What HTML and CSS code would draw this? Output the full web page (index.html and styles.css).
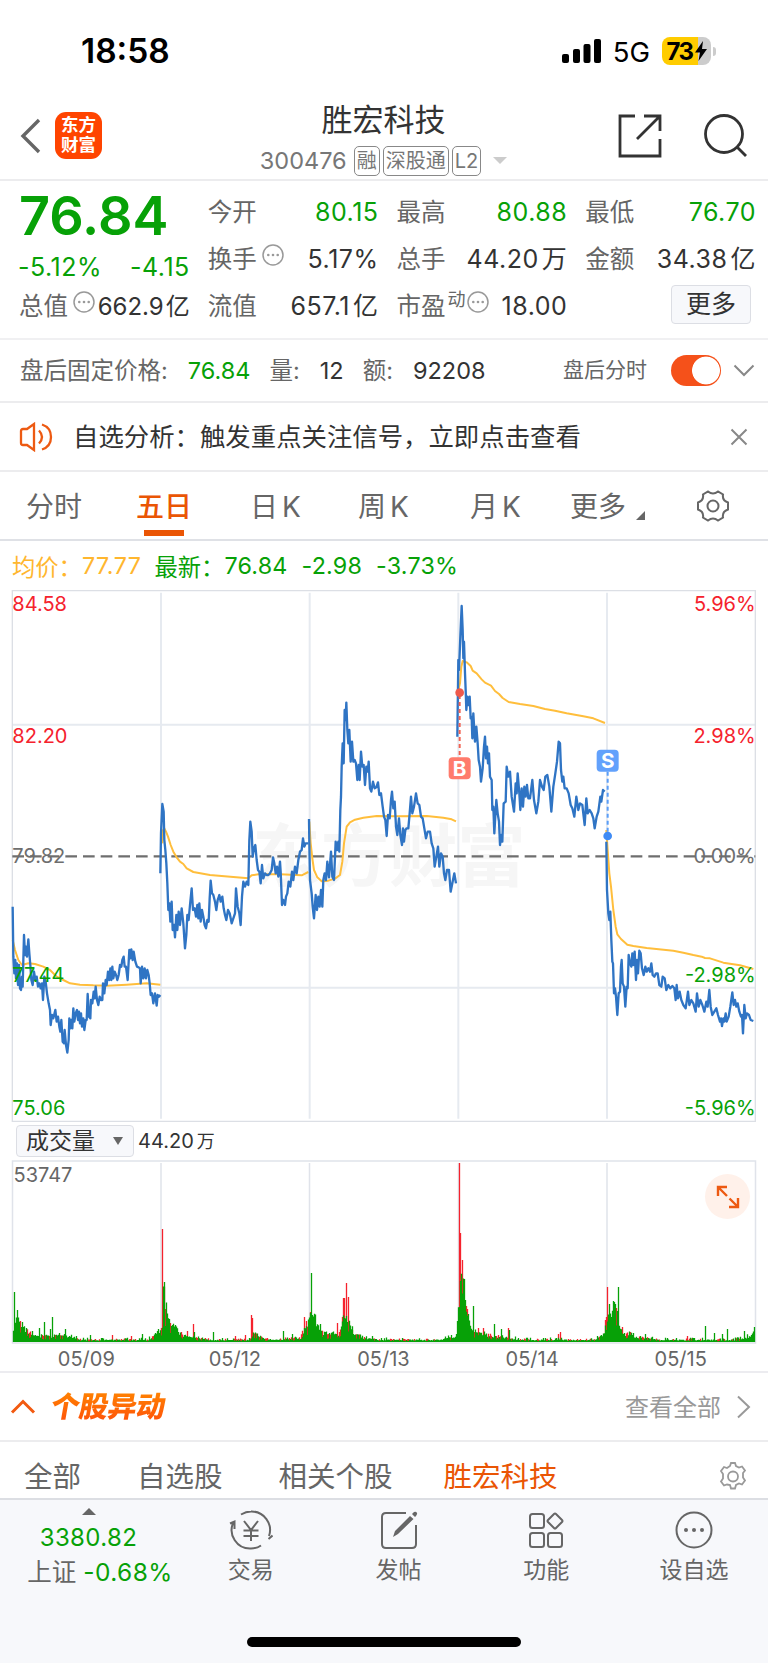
FILE: index.html
```
<!DOCTYPE html>
<html lang="zh-CN">
<head>
  <meta charset="UTF-8" />
  <meta name="viewport" content="width=device-width, initial-scale=1.0"/>
  <title>胜宏科技 300476</title>
  <link rel="stylesheet" href="styles.css">
</head>
<body>

<div class="status-bar">
  <span class="time">18:58</span>
  <div class="status-right">
    <svg class="signal" width="39" height="24" viewBox="0 0 39 24">
      <rect x="0" y="15" width="7" height="9" rx="2"/>
      <rect x="11" y="10" width="7" height="14" rx="2"/>
      <rect x="21.500" y="5" width="7" height="19" rx="2"/>
      <rect x="32" y="0" width="7" height="24" rx="2"/>
    </svg>
    <span class="network">5G</span>
    <div class="battery">
      <span>73</span>
      <svg width="12" height="20" viewBox="0 0 12 20"><path d="M8 0 0 11.500h5L3.500 20 12 8H7z"/></svg>
    </div>
    <span class="battery-cap"></span>
  </div>
</div>

<header class="header">
  <svg class="back" width="21" height="36" viewBox="0 0 21 36"><path d="M19 2 3 18l16 16"/></svg>
  <div class="logo">东方<br>财富</div>
  <div class="title">
    <h1>胜宏科技</h1>
    <div class="code">
      <span class="code-num">300476</span>
      <span class="badge">融</span>
      <span class="badge">深股通</span>
      <span class="badge">L2</span>
      <i class="tri-down"></i>
    </div>
  </div>
  <svg class="share" width="44" height="44" viewBox="0 0 44 44"><path d="M17 2H2v40h40V25M26 2h16v15M41 3 19 25"/></svg>
  <svg class="search" width="44" height="44" viewBox="0 0 44 44"><circle cx="20" cy="20" r="18.500"/><path d="M33 33l9 9"/></svg>
</header>

<section class="quote">
  <div class="cell big green">76.84</div>
  <div class="cell"><label>今开</label><b class="green">80.15</b></div>
  <div class="cell"><label>最高</label><b class="green">80.88</b></div>
  <div class="cell"><label>最低</label><b class="green">76.70</b></div>

  <div class="cell change green"><b>-5.12%</b><b>-4.15</b></div>
  <div class="cell"><label>换手</label><svg class="dots" viewBox="0 0 22 22"><use href="#dots"/></svg><b>5.17%</b></div>
  <div class="cell"><label>总手</label><b>44.20<u>万</u></b></div>
  <div class="cell"><label>金额</label><b>34.38<u>亿</u></b></div>

  <div class="cell total"><label>总值</label><svg class="dots" viewBox="0 0 22 22"><use href="#dots"/></svg><b>662.9<u>亿</u></b></div>
  <div class="cell"><label>流值</label><b>657.1<u>亿</u></b></div>
  <div class="cell pe"><label>市盈<sup>动</sup></label><svg class="dots" viewBox="0 0 22 22"><use href="#dots"/></svg><b>18.00</b></div>
  <div class="cell"><button class="more">更多</button></div>
</section>

<section class="after-hours">
  <label>盘后固定价格:</label><b class="green">76.84</b>
  <label>量:</label><b>12</b>
  <label>额:</label><b>92208</b>
  <span class="ah-label">盘后分时</span>
  <span class="toggle"></span>
  <svg class="chev" width="22" height="13" viewBox="0 0 22 13"><path d="M1.500 1.500 11 11l9.500-9.500"/></svg>
</section>

<section class="notice">
  <svg class="speaker" width="34" height="30" viewBox="0 0 34 30"><path d="M2 9v12q0 2 2 2h4l7 5V2L8 7H4q-2 0-2 2zM20 8.500q6 6.500 0 13M23 2.500q9 3 9 12.500t-9 12.500"/></svg>
  <span>自选分析：触发重点关注信号，立即点击查看</span>
  <svg class="close" width="18" height="18" viewBox="0 0 18 18"><path d="M1.500 1.500l15 15M16.500 1.500l-15 15"/></svg>
</section>

<nav class="tabs">
  <span>分时</span>
  <span class="active">五日</span>
  <span>日<em>K</em></span>
  <span>周<em>K</em></span>
  <span>月<em>K</em></span>
  <span>更多<i></i></span>
  <svg class="gear" width="34" height="32" viewBox="0 0 34 32"><path d="M12 1.500q5 4 10 0l5 3q-1 6 5 8v7q-6 2-5 8l-5 3q-5-4-10 0l-5-3q1-6-5-8v-7q6-2 5-8z"/><circle cx="17" cy="16" r="5.500"/></svg>
</nav>

<div class="legend">
  <span class="avg">均价：</span><span class="avg num">77.77</span>
  <span class="green">最新：</span><span class="green num">76.84</span>
  <span class="green num">-2.98</span>
  <span class="green num">-3.73%</span>
</div>

<!-- price chart, drawn at 3 units per pixel -->
<div class="price-chart">
  <svg width="768" height="533" viewBox="0 0 2304 1599">
    <g class="watermark"><text x="757" y="874">东方财富</text></g>
    <g class="grid">
      <path d="M483 8V1586M929 8V1586M1375 8V1586M1821 8V1586M37 404H2266M37 1193H2266"/>
      <path class="frame" d="M37 2H2266V1594H37z"/>
    </g>
    <path class="zero" d="M37 799H2266"/>
    <g class="avg-line">
      <polyline transform="translate(0 780)" points="38,270 45,300 55,330 66,345 85,340 105,342 130,350 150,360 170,380 190,390 210,400 240,404 280,406 320,407 380,404 440,400 481,404"/>
      <polyline transform="translate(0 780)" points="487,-20 489,-60 493,-65 498,-55 504,-40 512,-15 520,5 530,22 540,35 550,42 560,55 580,66 630,75 700,81 745,85 755,76 775,73 840,73 905,76 925,66"/>
      <polyline transform="translate(900 -30)" points="28,725 30,760 32,790 37,835 42,870 52,892 65,904 85,902 105,896 120,885 127,845 132,790 140,740 150,727 165,719 190,713 230,708 290,709 380,708 430,713 455,718 468,724"/>
      <polyline transform="translate(900 -30)" points="475,330 480,310 484,260 488,243 500,247 512,258 518,272 530,280 545,298 555,308 573,317 585,333 597,342 608,354 626,366 660,372 700,378 735,387 765,392 800,400 850,409 880,415 915,429"/>
      <polyline transform="translate(1320 450)" points="499,270 503,330 508,400 513,440 520,510 527,560 532,583 543,597 562,614 580,618 620,624 700,632 730,638 760,645 785,650 795,654 810,655 850,668 900,676 940,687"/>
    </g>
    <g class="price-line">
      <polyline transform="translate(0 780)" points="38,170 40,320 43,370 46,330 48,385 51,340 54,405 57,345 60,415 63,420 66,380 68,410 70,330 72,255 75,315 78,290 81,320 85,268 88,310 91,345 94,390 98,405 102,365 106,390 110,380 114,410 118,400 122,415 126,400 129,450 133,380 137,395 141,430 146,460 150,480 152,525 156,495 160,505 166,480 170,515 174,500 178,530 181,545 184,510 188,575 192,580 194,540 198,585 202,608 206,570 208,505 211,535 214,510 217,535 220,475 223,515 227,490 231,480 234,510 237,485 240,520 243,490 246,530 250,505 253,540 257,510 260,510 263,432 267,500 271,505 273,450 277,460 281,425 284,445 287,410 291,450 295,465 299,440 303,450 307,450 309,400 313,430 317,390 320,405 324,365 328,390 331,355 334,390 337,350 340,385 344,365 348,375 352,390 356,375 360,345 364,350 367,330 371,320 374,350 378,350 383,390 388,300 391,325 394,298 398,330 401,305 406,335 411,350 416,352 420,355 422,400 426,350 430,385 434,355 438,385 442,360 446,375 449,400 452,435 456,430 460,460 465,430 470,467 473,435 477,440 481,435"/>
      <polyline transform="translate(0 780)" points="481,70 483,-50 487,-138 491,-115 493,-30 496,0 499,40 502,100 505,180 508,160 511,215 515,155 518,240 522,225 525,262 529,195 532,240 536,185 540,225 545,175 550,220 555,295 559,255 562,195 566,210 570,165 575,115 579,180 584,175 588,200 592,165 595,205 598,160 602,215 606,180 610,200 614,225 618,235 622,210 626,215 629,145 632,92 636,130 640,135 645,155 649,180 653,150 658,135 662,155 667,140 671,175 675,195 679,210 684,180 689,190 695,220 700,205 705,190 708,115 713,170 718,190 722,225 726,140 730,95 735,110 740,95 745,105 748,-30 751,-85 755,-55 758,20 762,-5 766,-15 770,30 774,60 778,65 782,100 786,45 790,85 795,70 800,75 805,75 810,70 815,60 819,22 823,40 827,70 831,50 835,80 840,35 842,65 846,165 850,150 855,165 858,140 862,130 866,95 871,110 876,65 880,90 885,50 890,70 895,30 900,5 905,0 909,-35 913,-10 917,-20 921,-20 925,-20"/>
      <polyline transform="translate(900 -30)" points="27,717 28,790 30,900 35,940 38,980 42,1015 47,945 51,990 55,950 59,980 63,930 67,980 70,900 74,880 78,900 82,845 87,892 93,815 97,890 102,900 107,785 111,810 115,785 118,815 121,690 123,650 125,560 128,490 131,550 134,390 137,420 139,368 142,450 145,490 148,450 152,545 156,485 160,545 164,540 168,550 172,600 176,555 179,600 183,515 187,560 191,555 195,615 199,560 203,575 206,545 210,625 214,635 219,605 224,625 229,622 234,607 238,645 243,640 248,680 252,710 256,720 260,768 264,705 269,715 273,660 276,635 280,685 284,665 288,740 292,765 297,715 301,765 306,795 309,745 312,785 316,750 320,745 325,745 329,700 333,650 337,700 342,680 348,640 353,670 358,675 363,710 368,715 373,745 378,775 383,755 390,755 395,790 400,805 404,860 409,830 414,800 418,860 423,820 428,830 432,880 436,900 441,870 447,870 452,935 457,910 463,880 468,910"/>
      <polyline transform="translate(900 -30)" points="472,470 475,240 477,270 481,170 485,78 488,150 490,235 492,185 495,280 497,330 499,390 502,350 505,375 509,350 512,415 515,410 517,475 520,400 523,455 525,485 529,440 533,490 536,540 540,560 543,605 548,565 552,500 555,470 558,535 561,500 564,550 567,520 570,590 575,600 577,690 580,680 583,760 587,690 589,660 593,700 597,725 600,795 604,765 607,785 611,670 617,665 620,560 625,590 630,575 635,650 642,695 647,610 650,640 653,580 658,640 661,690 665,625 669,680 673,620 677,650 681,615 685,655 690,655 697,600 702,660 709,700 715,665 720,600 726,620 731,630 736,590 742,585 748,620 754,695 760,620 766,580 771,545 776,485 780,490 783,570 787,605 790,590 794,625 800,625 806,640 812,675 817,685 823,710 829,650 835,690 840,670 847,675 854,735 859,655 863,700 869,690 875,700 880,715 884,745 890,710 895,695 901,650 904,665 909,630 914,635"/>
      <polyline transform="translate(1320 450)" points="499,305 501,450 505,520 508,540 511,515 514,600 517,665 519,670 522,760 525,745 528,770 532,825 536,760 540,755 543,680 545,660 548,730 552,740 556,800 560,740 563,745 566,645 570,670 574,680 577,640 580,675 584,635 588,720 591,660 594,700 598,632 602,640 606,685 611,705 616,680 620,695 625,685 630,695 634,670 638,705 643,710 648,700 653,700 658,735 664,740 668,710 674,715 679,750 685,735 691,745 697,738 703,745 707,780 710,735 714,775 719,755 724,780 730,795 737,805 744,755 748,795 754,780 760,790 767,815 771,760 776,800 781,780 787,795 793,815 799,785 803,800 808,750 812,800 817,825 823,815 829,805 834,825 840,845 843,835 846,858 850,835 853,845 857,820 860,845 866,830 871,800 877,757 881,795 885,780 889,800 893,790 898,815 903,830 906,825 909,880 913,795 917,835 921,820 927,825 932,840 940,843"/>
    </g>
    <g class="buy">
      <path d="M1379 315V500"/><circle cx="1379" cy="308" r="13"/>
      <rect x="1346" y="502" width="66" height="66" rx="12"/><text x="1379" y="557">B</text>
    </g>
    <g class="sell">
      <path d="M1823 545V730"/><circle cx="1823" cy="738" r="13"/>
      <rect x="1790" y="479" width="66" height="66" rx="12"/><text x="1823" y="534">S</text>
    </g>
    <g class="axis">
      <text class="up" x="37" y="62">84.58</text>
      <text class="up" x="37" y="460">82.20</text>
      <text class="flat" x="37" y="819">79.82</text>
      <text class="down" x="37" y="1176">77.44</text>
      <text class="down" x="37" y="1574">75.06</text>
      <text class="up end" x="2267" y="62">5.96%</text>
      <text class="up end" x="2267" y="460">2.98%</text>
      <text class="flat end" x="2267" y="819">0.00%</text>
      <text class="down end" x="2267" y="1176">-2.98%</text>
      <text class="down end" x="2267" y="1574">-5.96%</text>
    </g>
  </svg>
</div>

<div class="indicator">
  <div class="select">成交量<i></i></div>
  <span>44.20<u>万</u></span>
</div>

<div class="volume-chart">
  <svg width="768" height="184" viewBox="0 0 768 184">
    <path class="grid-v" d="M161 3V181M309.500 3V181M458.500 3V181M607 3V181"/>
    <path class="frame" d="M12.500 1H755.500V183H12.500z"/>
    <path id="vol-red" class="vol-red"/>
    <path id="vol-green" class="vol-green"/>
    <text x="13.500" y="22">53747</text>
  </svg>
  <div class="expand">
    <svg width="24" height="24" viewBox="0 0 24 24"><path d="M2 11V2h9M2 2l9 9M22 13v9h-9M22 22l-8.500-8.500"/></svg>
  </div>
</div>

<div class="dates">
  <span>05/09</span><span>05/12</span><span>05/13</span><span>05/14</span><span>05/15</span>
</div>

<section class="moves">
  <svg class="up-chev" width="26" height="15" viewBox="0 0 26 15"><path d="M2 13.500 13 2.500l11 11"/></svg>
  <h2>个股异动</h2>
  <span class="all">查看全部</span>
  <svg class="right-chev" width="15" height="24" viewBox="0 0 15 24"><path d="M2 1.500 13 12 2 22.500"/></svg>
</section>

<nav class="filters">
  <span>全部</span>
  <span>自选股</span>
  <span>相关个股</span>
  <span class="active">胜宏科技</span>
  <svg width="30" height="30" viewBox="0 0 30 30"><path d="M12 4l1-3h4l1 3 3 1.500 3-1 3 4-2 2.500v4.500l2 3-3 4-3-1-3 1.500-1 3.500h-4l-1-3.500L9 22.500l-3 1-3-4 2-3V12L3 9l3-4 3 1z"/><circle cx="15" cy="14.500" r="5"/></svg>
</nav>

<footer class="bottom-bar">
  <div class="index">
    <i class="tri-up"></i>
    <div class="green index-val">3380.82</div>
    <div class="index-chg">上证<span class="green">-0.68%</span></div>
  </div>
  <div class="item">
    <svg width="44" height="40" viewBox="0 0 44 40"><path d="M12 4.500Q17 1.500 22 1.500A18.500 18.500 0 0 1 40 26M43.500 25.500l-4 3.500M32 35.500q-4.500 3-10 3A18.500 18.500 0 0 1 4.500 12M1 13.500l4.500-2V19M15 11l7 9 7-9M22 20v11M14.500 20.500h15M14.500 26h15"/></svg>
    交易
  </div>
  <div class="item">
    <svg width="40" height="40" viewBox="0 0 40 40"><path d="M27 3H7q-4 0-4 4v27q0 4 4 4h26q4 0 4-4V15"/><path class="fill" d="M31 6l3.500 3L19 24l-5 3 2-6zM33 4l2-2q2-1 3 1 .5 1-1 3l-1 1z"/></svg>
    发帖
  </div>
  <div class="item">
    <svg width="40" height="40" viewBox="0 0 40 40"><rect x="4" y="4" width="14" height="14" rx="2.500"/><rect x="4" y="23" width="14" height="14" rx="2.500"/><rect x="22" y="23" width="14" height="14" rx="2.500"/><path d="M28 4q1-1 2 0l6 6q1 1 0 2l-6 6q-1 1-2 0l-6-6q-1-1 0-2z"/></svg>
    功能
  </div>
  <div class="item">
    <svg width="40" height="40" viewBox="0 0 40 40"><circle cx="20" cy="20" r="17.500"/><g class="fill"><circle cx="12" cy="20" r="2"/><circle cx="20" cy="20" r="2"/><circle cx="28" cy="20" r="2"/></g></svg>
    设自选
  </div>
  <span class="home-indicator"></span>
</footer>

<svg class="defs">
  <symbol id="dots" viewBox="0 0 22 22"><circle class="ring" cx="11" cy="11" r="10"/><circle cx="6.300" cy="11" r="1.300"/><circle cx="11" cy="11" r="1.300"/><circle cx="15.700" cy="11" r="1.300"/></symbol>
</svg>

<script src="volume.js"></script>
</body>
</html>
```
FILE: styles.css
```
* {
  box-sizing: border-box;
}
body {
  margin: 0;
  width: 768px;
  height: 1663px;
  overflow: hidden;
  background: #fff;
  color: #333;
  font-family: Inter, "Noto Sans CJK SC", sans-serif;
  display: flex;
  flex-direction: column;
}
body > * {
  flex: none;
}
svg {
  display: block;
  flex: none;
  fill: none;
  stroke: #666;
  stroke-width: 2;
}
svg text {
  stroke: none;
}
b {
  font-weight: 400;
}
u {
  text-decoration: none;
  margin-left: 3px;
}
.green {
  color: #07a107;
}
.defs {
  display: none;
}

/* status bar */
.status-bar {
  height: 102px;
  padding: 0 52px 0 81px;
  display: flex;
  align-items: center;
  justify-content: space-between;
  color: #000;
}
.time {
  font-size: 33.5px;
  font-weight: 600;
}
.status-right {
  display: flex;
  align-items: center;
}
.signal {
  fill: #000;
  stroke: none;
}
.network {
  font-size: 27.5px;
  margin: 2px 12px 0 12px;
}
.battery {
  width: 49px;
  height: 28px;
  border-radius: 8px;
  background: linear-gradient(90deg, #ffcc00 73%, #ccc 73%);
  display: flex;
  align-items: center;
  justify-content: center;
  font-size: 24px;
  font-weight: 700;
  letter-spacing: -1.5px;
}
.battery svg {
  fill: #000;
  stroke: none;
  margin-left: 2px;
}
.battery-cap {
  width: 3px;
  height: 9px;
  margin-left: 2px;
  border-radius: 0 4px 4px 0;
  background: #ccc;
}

/* header */
.header {
  height: 79px;
  padding: 0 20px 0 20px;
  display: grid;
  grid-template-columns: 21px 48px 1fr 44px 44px;
  align-items: start;
  border-bottom: 2px solid #ececee;
}
.back {
  margin-top: 16px;
  stroke-width: 3.4;
}
.logo {
  margin: 10px 0 0 14px;
  width: 47px;
  height: 47px;
  border-radius: 11px;
  background: #ff4400;
  color: #fff;
  font-size: 17.5px;
  line-height: 20px;
  font-weight: 700;
  text-align: center;
  padding-top: 3px;
}
.title {
  margin-left: 18px;
  display: flex;
  flex-direction: column;
  align-items: center;
}
.title h1 {
  margin: 0;
  font-size: 31px;
  line-height: 36px;
  font-weight: 400;
}
.code {
  display: flex;
  align-items: center;
  height: 31px;
  margin-top: 7px;
  color: #777;
}
.code-num {
  font-size: 23.5px;
  margin-right: 7px;
}
.badge {
  height: 30px;
  line-height: 28px;
  padding: 0 2px;
  margin-right: 3px;
  border: 1.5px solid #888;
  border-radius: 5px;
  font-size: 20px;
}
.tri-down {
  margin-left: 9px;
  border: 7px solid transparent;
  border-top-color: #ccc;
  border-bottom: 0;
}
.share, .search {
  margin-top: 12px;
  stroke: #333;
  stroke-width: 2.800;
}
.share {
  margin-left: -42px;
}

/* quote */
.quote {
  height: 159px;
  padding: 8px 13px 0 19px;
  display: grid;
  grid-template-columns: repeat(4, 1fr);
  grid-auto-rows: 47px;
  column-gap: 19px;
  border-bottom: 2px solid #f0f0f2;
  font-size: 25px;
  line-height: 47px;
}
.cell {
  display: flex;
  align-items: center;
  white-space: nowrap;
}
.cell label {
  font-size: 24.5px;
  color: #666;
}
.cell b {
  margin-left: auto;
  margin-right: -1px;
  letter-spacing: 0.5px;
}
.cell .dots {
  width: 22px;
  height: 22px;
  margin: -10px 0 0 5px;
}
.ring {
  stroke: #999;
  stroke-width: 1.5;
}
.dots {
  stroke: none;
  fill: none;
}
#dots circle:not(.ring) {
  fill: #999;
}
.big {
  font-size: 54px;
  font-weight: 600;
  padding-top: 6px;
}
.change {
  padding-top: 15px;
}
.change b:first-child {
  margin-left: -1px;
}
.total b {
  font-size: 24px;
  letter-spacing: 0;
}
.total u {
  margin-left: 2px;
}
.pe label {
  position: relative;
}
.pe sup {
  font-size: 18px;
  line-height: 18px;
  vertical-align: 9px;
  margin-left: 2px;
}
.pe .dots {
  margin-left: 1px;
}
.more {
  width: 80px;
  height: 39px;
  margin: -4px 4px 0 auto;
  padding: 0;
  border: 1.5px solid #dcdee4;
  border-radius: 4px;
  background: #f7f8fb;
  color: #333;
  font: inherit;
  font-size: 25px;
  line-height: 35px;
}

/* after hours */
.after-hours {
  height: 63px;
  padding: 0 13px 0 20px;
  display: flex;
  align-items: center;
  border-bottom: 2px solid #ececee;
  font-size: 23.5px;
  line-height: 36px;
}
.after-hours label {
  color: #666;
  margin: 0 20px 0 0;
}
.after-hours b {
  margin-right: 19px;
}
.after-hours .ah-label {
  margin: -1px 0 0 auto;
  font-size: 21px;
  color: #666;
}
.toggle {
  width: 50px;
  height: 31px;
  margin: 0 12px 0 24px;
  border-radius: 16px;
  background: radial-gradient(circle at 35px 15.500px, #fff 13.500px, #f5511a 14.300px);
}
.chev {
  stroke: #888;
}

/* notice */
.notice {
  height: 69px;
  padding: 0 20px 0 19px;
  display: flex;
  align-items: center;
  border-bottom: 2px solid #ececee;
  font-size: 25.4px;
}
.notice span {
  margin: -4px auto 0 20px;
}
.speaker {
  stroke: #ed5a12;
  stroke-width: 2.3;
}
.close {
  stroke: #888;
}

/* tabs */
.tabs {
  height: 69px;
  padding: 0 38px 0 26px;
  display: grid;
  grid-template-columns: 110px 114px 108px 112px 100px 1fr 34px;
  align-items: center;
  border-bottom: 2px solid #dfe1e6;
  font-size: 28px;
  color: #666;
}
.tabs span {
  justify-self: start;
  height: 67px;
  line-height: 71px;
  white-space: nowrap;
}
.tabs em {
  font-style: normal;
  margin-left: 4px;
}
.tabs .active {
  color: #ea5504;
  font-weight: 500;
  background: linear-gradient(#ea5504, #ea5504) center 58px / 40px 6px no-repeat;
}
.tabs i {
  display: inline-block;
  margin-left: 10px;
  border-left: 9px solid transparent;
  border-bottom: 9px solid #666;
  vertical-align: -3px;
}

/* chart legend */
.legend {
  height: 49px;
  padding-left: 12px;
  display: flex;
  align-items: center;
  font-size: 23.3px;
}
.avg {
  color: #ffb62e;
}
.legend .num {
  margin-right: 14px;
  letter-spacing: 0.2px;
}
.legend .avg.num {
  margin-right: 13px;
  letter-spacing: 0.5px;
}

/* price chart */
.price-chart {
  height: 533px;
}
.grid {
  stroke: #e6eaf0;
  stroke-width: 6;
}
.frame {
  stroke: #dcdfe5;
  stroke-width: 4;
}
.zero {
  stroke: #6e6e6e;
  stroke-width: 7;
  stroke-dasharray: 35 18;
}
.watermark text {
  font-size: 205px;
  font-weight: 700;
  fill: #f6f6f6;
}
.avg-line {
  stroke: #ffbe3c;
  stroke-width: 6;
  stroke-linejoin: round;
}
.price-line {
  stroke: #2f74c4;
  stroke-width: 7;
  stroke-linejoin: round;
}
.buy {
  stroke: #f26353;
  stroke-width: 6;
  stroke-dasharray: 12 9;
}
.sell {
  stroke: #5b9ef8;
  stroke-width: 6;
  stroke-dasharray: 12 9;
}
.buy circle, .buy rect, .sell circle, .sell rect {
  stroke: none;
}
.buy circle {
  fill: #ee5a4c;
}
.buy rect {
  fill: #ff7b6c;
}
.sell circle {
  fill: #3f8bf5;
}
.sell rect {
  fill: #62a1fc;
}
.buy text, .sell text {
  fill: #fff;
  font-size: 62px;
  font-weight: 700;
  text-anchor: middle;
}
.axis text {
  font-size: 60px;
}
.axis .up {
  fill: #f5222d;
}
.axis .down {
  fill: #07a107;
}
.axis .flat {
  fill: #6e6e6e;
}
.axis .end {
  text-anchor: end;
}

/* volume */
.indicator {
  height: 37px;
  padding: 2px 0 0 16px;
  display: flex;
  align-items: flex-start;
  font-size: 20px;
  line-height: 33px;
}
.indicator u {
  font-size: 18px;
}
.select {
  width: 118px;
  height: 32px;
  margin-right: 4px;
  padding: 0 10px 0 9px;
  display: flex;
  align-items: center;
  justify-content: space-between;
  border: 1.5px solid #dcdee4;
  border-radius: 4px;
  background: #f7f8fb;
  font-size: 23px;
  line-height: 30px;
}
.select i {
  border: 5px solid transparent;
  border-top: 8px solid #666;
  border-bottom: 0;
}
.volume-chart {
  position: relative;
  height: 184px;
}
.volume-chart .frame, .grid-v {
  stroke: #e0e3ea;
  stroke-width: 1.5;
}
.volume-chart text {
  fill: #666;
  font-size: 20px;
}
.vol-red, .vol-green {
  stroke: #f5222d;
  stroke-width: 1.3;
}
.vol-green {
  stroke: #07a107;
}
.expand {
  position: absolute;
  right: 18px;
  top: 14px;
  width: 45px;
  height: 45px;
  border-radius: 50%;
  background: #fff1ea;
  display: flex;
  align-items: center;
  justify-content: center;
}
.expand svg {
  stroke: #ed5a12;
  stroke-width: 2.4;
}
.dates {
  height: 29px;
  padding: 0 13px 0 12px;
  display: grid;
  grid-template-columns: repeat(5, 1fr);
  border-bottom: 2px solid #ececf0;
  text-align: center;
  font-size: 20px;
  line-height: 30px;
  color: #666;
}

/* stock moves */
.moves {
  height: 69px;
  padding: 0 17px 0 10px;
  display: flex;
  align-items: center;
  border-bottom: 2px solid #ececee;
}
.up-chev {
  stroke: #f25a10;
  stroke-width: 3;
}
.moves h2 {
  margin: 0 auto 0 15px;
  font-size: 29px;
  line-height: 40px;
  font-weight: 900;
  letter-spacing: -0.5px;
  transform: skewX(-10deg);
  background: linear-gradient(#ff8a00, #ff4a0a);
  -webkit-background-clip: text;
  background-clip: text;
  color: transparent;
}
.all {
  margin: -3px 15px 0 0;
  font-size: 24px;
  color: #999;
}
.right-chev {
  stroke: #999;
}
.filters {
  height: 56px;
  padding: 13px 20px 0 24px;
  display: flex;
  align-items: center;
  font-size: 28.5px;
  line-height: 43px;
  color: #666;
}
.filters span {
  margin-right: 56px;
}
.filters span:nth-child(3) {
  margin-right: 51px;
}
.filters .active {
  color: #ea5504;
  margin-right: auto;
}
.filters svg {
  stroke: #999;
  stroke-width: 1.8;
}

/* bottom bar */
.bottom-bar {
  position: relative;
  height: 166px;
  display: grid;
  grid-template-columns: 177px repeat(4, 147.700px);
  border-top: 2px solid #dcdee3;
  background: #f7f8fb;
  color: #666;
}
.index {
  display: flex;
  flex-direction: column;
  align-items: center;
}
.tri-up {
  margin-top: 8px;
  border: 7px solid transparent;
  border-bottom-color: #666;
  border-top: 0;
}
.index-val {
  margin-top: 6px;
  font-size: 24px;
  line-height: 34px;
  letter-spacing: 0.4px;
}
.index-chg {
  padding-left: 23px;
  font-size: 24.5px;
  line-height: 34px;
  white-space: nowrap;
}
.index-chg span {
  margin-left: 7px;
  letter-spacing: 0.4px;
}
.item {
  padding-top: 10px;
  display: flex;
  flex-direction: column;
  align-items: center;
  font-size: 23px;
  line-height: 40px;
}
.fill {
  fill: #666;
  stroke: none;
}
.home-indicator {
  position: absolute;
  left: 247px;
  bottom: 17px;
  width: 274px;
  height: 10px;
  border-radius: 5px;
  background: #000;
}
```
FILE: volume.js
```
// typical bar height at a given x, linear in between
const base = [
  [13, 15], [16, 24], [22, 13], [30, 8], [40, 5], [55, 6], [70, 5], [80, 2], [148, 2], [155, 8], [161, 13],
  [163, 60], [166, 32], [168, 18], [173, 20], [178, 9], [188, 5], [210, 2], [250, 2], [254, 9], [260, 4],
  [275, 2], [300, 4], [305, 15], [310, 24], [313, 31], [316, 17], [323, 9], [338, 8], [341, 16],
  [346, 33], [348, 20], [353, 9], [362, 4], [380, 2], [440, 2], [456, 6], [459, 40], [461, 66], [464, 50],
  [467, 26], [470, 14], [478, 9], [490, 6], [510, 3], [530, 2], [595, 2], [604, 8], [608, 32], [611, 27],
  [616, 34], [619, 14], [624, 8], [640, 4], [660, 2], [705, 2], [735, 2], [745, 4], [754, 8]
];

// single tall bars: x, height, r = up, g = down
const spikes = [
  [14, 50, 'g'], [17, 32, 'g'], [20, 21, 'r'], [22, 20, 'g'], [26, 14, 'g'], [39, 14, 'g'], [44, 20, 'g'],
  [50, 13, 'g'], [52, 25, 'g'], [59, 9, 'g'], [65, 13, 'g'], [90, 7, 'g'], [112, 7, 'r'], [131, 6, 'r'], [142, 8, 'g'],
  [162, 113, 'r'], [164, 60, 'g'], [187, 11, 'r'], [193, 18, 'r'], [194, 10, 'g'], [213, 10, 'g'],
  [235, 6, 'r'], [245, 7, 'r'], [251, 27, 'r'], [252, 24, 'r'], [283, 11, 'g'], [292, 8, 'g'],
  [304, 25, 'r'], [306, 21, 'r'], [310, 30, 'r'], [311, 69, 'g'], [320, 18, 'g'], [337, 19, 'r'],
  [342, 25, 'r'], [343, 44, 'r'], [344, 44, 'r'], [346, 59, 'r'], [348, 45, 'r'], [352, 12, 'r'], [372, 6, 'g'],
  [459, 179, 'r'], [460, 109, 'r'], [462, 82, 'r'], [464, 63, 'g'], [466, 36, 'r'], [467, 33, 'r'], [468, 28, 'g'],
  [473, 36, 'g'], [478, 14, 'r'], [483, 14, 'r'], [494, 18, 'g'], [501, 13, 'g'], [508, 14, 'r'],
  [509, 12, 'g'], [558, 8, 'r'], [560, 10, 'r'], [605, 22, 'r'], [607, 55, 'r'], [613, 41, 'g'], [615, 38, 'g'],
  [618, 55, 'g'], [622, 15, 'r'], [630, 10, 'r'], [645, 8, 'g'], [687, 6, 'r'], [705, 16, 'g'],
  [714, 9, 'g'], [722, 8, 'g'], [727, 13, 'g'], [744, 11, 'g'], [754, 15, 'g']
];

const bottom = 182;
let red = '';
let green = '';
let seed = 7;

function rand() {
  seed = (seed * 16807) % 2147483647;
  return seed / 2147483647;
}

function bar(x, h) {
  return `M${x + 0.5} ${bottom}V${(bottom - h).toFixed(1)}`;
}

for (let x = 13; x < 755; x++) {
  const i = base.findIndex(p => p[0] > x);
  const [x0, h0] = base[i < 0 ? base.length - 1 : i - 1];
  const [x1, h1] = base[i < 0 ? base.length - 1 : i];
  const mid = x1 === x0 ? h0 : h0 + (h1 - h0) * (x - x0) / (x1 - x0);
  const h = Math.max(1.5, mid * (0.75 + rand() * 0.5));
  if (rand() < 0.2) {
    red += bar(x, h + 1);
    green += bar(x, h * 0.5);
  } else {
    green += bar(x, h + (rand() < 0.2 ? 2 : 0));
  }
}

spikes.forEach(([x, h, c]) => {
  if (c === 'r') red += bar(x, h);
  else green += bar(x, h);
});

document.getElementById('vol-red').setAttribute('d', red);
document.getElementById('vol-green').setAttribute('d', green);
```
